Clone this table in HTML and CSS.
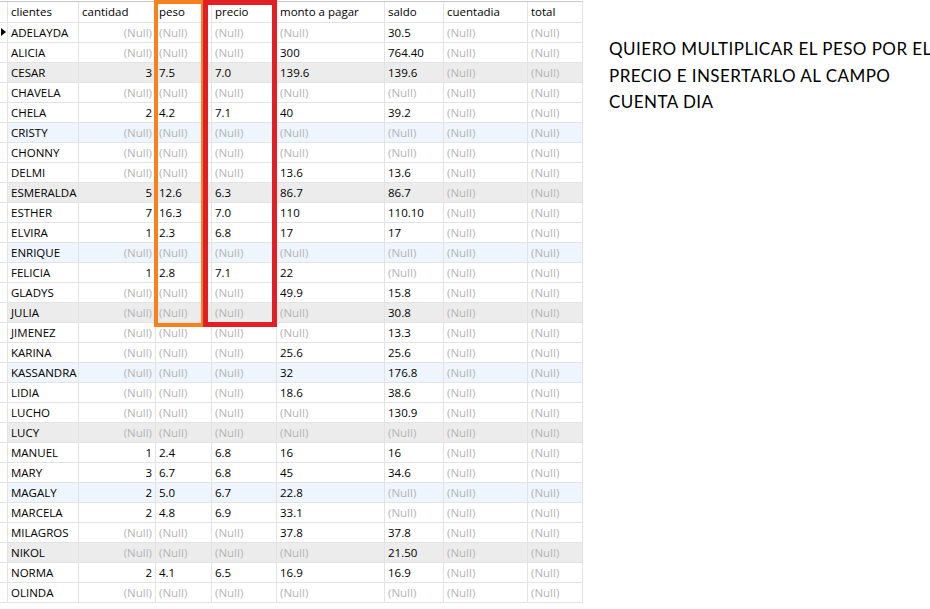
FILE: index.html
```html
<!DOCTYPE html>
<html>
<head>
<meta charset="utf-8">
<link rel="stylesheet" href="styles.css">
</head>
<body>
<div class="page">
  <div class="grid-wrap">
    <div class="grid">
      <div class="row head"><div class="c ind"></div><div class="c">clientes</div><div class="c">cantidad</div><div class="c">peso</div><div class="c">precio</div><div class="c">monto a pagar</div><div class="c">saldo</div><div class="c">cuentadia</div><div class="c">total</div></div>
      <div class="row"><div class="c ind"><span class="arrow"></span></div><div class="c">ADELAYDA</div><div class="c r n">(Null)</div><div class="c n">(Null)</div><div class="c n">(Null)</div><div class="c n">(Null)</div><div class="c">30.5</div><div class="c n">(Null)</div><div class="c n">(Null)</div></div>
      <div class="row"><div class="c ind"></div><div class="c">ALICIA</div><div class="c r n">(Null)</div><div class="c n">(Null)</div><div class="c n">(Null)</div><div class="c">300</div><div class="c">764.40</div><div class="c n">(Null)</div><div class="c n">(Null)</div></div>
      <div class="row gray"><div class="c ind"></div><div class="c">CESAR</div><div class="c r">3</div><div class="c">7.5</div><div class="c">7.0</div><div class="c">139.6</div><div class="c">139.6</div><div class="c n">(Null)</div><div class="c n">(Null)</div></div>
      <div class="row"><div class="c ind"></div><div class="c">CHAVELA</div><div class="c r n">(Null)</div><div class="c n">(Null)</div><div class="c n">(Null)</div><div class="c n">(Null)</div><div class="c n">(Null)</div><div class="c n">(Null)</div><div class="c n">(Null)</div></div>
      <div class="row"><div class="c ind"></div><div class="c">CHELA</div><div class="c r">2</div><div class="c">4.2</div><div class="c">7.1</div><div class="c">40</div><div class="c">39.2</div><div class="c n">(Null)</div><div class="c n">(Null)</div></div>
      <div class="row blue"><div class="c ind"></div><div class="c">CRISTY</div><div class="c r n">(Null)</div><div class="c n">(Null)</div><div class="c n">(Null)</div><div class="c n">(Null)</div><div class="c n">(Null)</div><div class="c n">(Null)</div><div class="c n">(Null)</div></div>
      <div class="row"><div class="c ind"></div><div class="c">CHONNY</div><div class="c r n">(Null)</div><div class="c n">(Null)</div><div class="c n">(Null)</div><div class="c n">(Null)</div><div class="c n">(Null)</div><div class="c n">(Null)</div><div class="c n">(Null)</div></div>
      <div class="row"><div class="c ind"></div><div class="c">DELMI</div><div class="c r n">(Null)</div><div class="c n">(Null)</div><div class="c n">(Null)</div><div class="c">13.6</div><div class="c">13.6</div><div class="c n">(Null)</div><div class="c n">(Null)</div></div>
      <div class="row gray"><div class="c ind"></div><div class="c">ESMERALDA</div><div class="c r">5</div><div class="c">12.6</div><div class="c">6.3</div><div class="c">86.7</div><div class="c">86.7</div><div class="c n">(Null)</div><div class="c n">(Null)</div></div>
      <div class="row"><div class="c ind"></div><div class="c">ESTHER</div><div class="c r">7</div><div class="c">16.3</div><div class="c">7.0</div><div class="c">110</div><div class="c">110.10</div><div class="c n">(Null)</div><div class="c n">(Null)</div></div>
      <div class="row"><div class="c ind"></div><div class="c">ELVIRA</div><div class="c r">1</div><div class="c">2.3</div><div class="c">6.8</div><div class="c">17</div><div class="c">17</div><div class="c n">(Null)</div><div class="c n">(Null)</div></div>
      <div class="row blue"><div class="c ind"></div><div class="c">ENRIQUE</div><div class="c r n">(Null)</div><div class="c n">(Null)</div><div class="c n">(Null)</div><div class="c n">(Null)</div><div class="c n">(Null)</div><div class="c n">(Null)</div><div class="c n">(Null)</div></div>
      <div class="row"><div class="c ind"></div><div class="c">FELICIA</div><div class="c r">1</div><div class="c">2.8</div><div class="c">7.1</div><div class="c">22</div><div class="c n">(Null)</div><div class="c n">(Null)</div><div class="c n">(Null)</div></div>
      <div class="row"><div class="c ind"></div><div class="c">GLADYS</div><div class="c r n">(Null)</div><div class="c n">(Null)</div><div class="c n">(Null)</div><div class="c">49.9</div><div class="c">15.8</div><div class="c n">(Null)</div><div class="c n">(Null)</div></div>
      <div class="row gray"><div class="c ind"></div><div class="c">JULIA</div><div class="c r n">(Null)</div><div class="c n">(Null)</div><div class="c n">(Null)</div><div class="c n">(Null)</div><div class="c">30.8</div><div class="c n">(Null)</div><div class="c n">(Null)</div></div>
      <div class="row"><div class="c ind"></div><div class="c">JIMENEZ</div><div class="c r n">(Null)</div><div class="c n">(Null)</div><div class="c n">(Null)</div><div class="c n">(Null)</div><div class="c">13.3</div><div class="c n">(Null)</div><div class="c n">(Null)</div></div>
      <div class="row"><div class="c ind"></div><div class="c">KARINA</div><div class="c r n">(Null)</div><div class="c n">(Null)</div><div class="c n">(Null)</div><div class="c">25.6</div><div class="c">25.6</div><div class="c n">(Null)</div><div class="c n">(Null)</div></div>
      <div class="row blue"><div class="c ind"></div><div class="c">KASSANDRA</div><div class="c r n">(Null)</div><div class="c n">(Null)</div><div class="c n">(Null)</div><div class="c">32</div><div class="c">176.8</div><div class="c n">(Null)</div><div class="c n">(Null)</div></div>
      <div class="row"><div class="c ind"></div><div class="c">LIDIA</div><div class="c r n">(Null)</div><div class="c n">(Null)</div><div class="c n">(Null)</div><div class="c">18.6</div><div class="c">38.6</div><div class="c n">(Null)</div><div class="c n">(Null)</div></div>
      <div class="row"><div class="c ind"></div><div class="c">LUCHO</div><div class="c r n">(Null)</div><div class="c n">(Null)</div><div class="c n">(Null)</div><div class="c n">(Null)</div><div class="c">130.9</div><div class="c n">(Null)</div><div class="c n">(Null)</div></div>
      <div class="row gray"><div class="c ind"></div><div class="c">LUCY</div><div class="c r n">(Null)</div><div class="c n">(Null)</div><div class="c n">(Null)</div><div class="c n">(Null)</div><div class="c n">(Null)</div><div class="c n">(Null)</div><div class="c n">(Null)</div></div>
      <div class="row"><div class="c ind"></div><div class="c">MANUEL</div><div class="c r">1</div><div class="c">2.4</div><div class="c">6.8</div><div class="c">16</div><div class="c">16</div><div class="c n">(Null)</div><div class="c n">(Null)</div></div>
      <div class="row"><div class="c ind"></div><div class="c">MARY</div><div class="c r">3</div><div class="c">6.7</div><div class="c">6.8</div><div class="c">45</div><div class="c">34.6</div><div class="c n">(Null)</div><div class="c n">(Null)</div></div>
      <div class="row blue"><div class="c ind"></div><div class="c">MAGALY</div><div class="c r">2</div><div class="c">5.0</div><div class="c">6.7</div><div class="c">22.8</div><div class="c n">(Null)</div><div class="c n">(Null)</div><div class="c n">(Null)</div></div>
      <div class="row"><div class="c ind"></div><div class="c">MARCELA</div><div class="c r">2</div><div class="c">4.8</div><div class="c">6.9</div><div class="c">33.1</div><div class="c n">(Null)</div><div class="c n">(Null)</div><div class="c n">(Null)</div></div>
      <div class="row"><div class="c ind"></div><div class="c">MILAGROS</div><div class="c r n">(Null)</div><div class="c n">(Null)</div><div class="c n">(Null)</div><div class="c">37.8</div><div class="c">37.8</div><div class="c n">(Null)</div><div class="c n">(Null)</div></div>
      <div class="row gray"><div class="c ind"></div><div class="c">NIKOL</div><div class="c r n">(Null)</div><div class="c n">(Null)</div><div class="c n">(Null)</div><div class="c n">(Null)</div><div class="c">21.50</div><div class="c n">(Null)</div><div class="c n">(Null)</div></div>
      <div class="row"><div class="c ind"></div><div class="c">NORMA</div><div class="c r">2</div><div class="c">4.1</div><div class="c">6.5</div><div class="c">16.9</div><div class="c">16.9</div><div class="c n">(Null)</div><div class="c n">(Null)</div></div>
      <div class="row"><div class="c ind"></div><div class="c">OLINDA</div><div class="c r n">(Null)</div><div class="c n">(Null)</div><div class="c n">(Null)</div><div class="c n">(Null)</div><div class="c n">(Null)</div><div class="c n">(Null)</div><div class="c n">(Null)</div></div>
    </div>
    <div class="mark orange"></div>
    <div class="mark red"></div>
  </div>
  <div class="note">
    <div class="line">QUIERO MULTIPLICAR EL PESO POR EL</div>
    <div class="line">PRECIO E INSERTARLO AL CAMPO</div>
    <div class="line">CUENTA DIA</div>
  </div>
</div>
</body>
</html>
```

FILE: styles.css
```css
html, body {
  margin: 0;
  padding: 0;
  background: #ffffff;
  overflow: hidden;
}
.page {
  display: flex;
  align-items: flex-start;
  width: 930px;
  height: 609px;
  overflow: hidden;
}
.grid-wrap {
  position: relative;
  flex: 0 0 auto;
  padding-top: 1px;
}
.grid {
  border-top: 1px solid #c9c9c9;
  font-family: "Open Sans", "Noto Sans", sans-serif;
  font-size: 11.5px;
  color: #000;
}
.row {
  display: grid;
  grid-template-columns: 8px 71px 77px 56px 65px 108px 59px 84px 55px;
  height: 20px;
}
.row.head {
  height: 21px;
}
.row.gray {
  background: #ececec;
}
.row.blue {
  background: #eef5fd;
}
.c {
  box-sizing: border-box;
  border-right: 1px solid #e3e3e3;
  border-bottom: 1px solid #e3e3e3;
  padding: 0 3px;
  line-height: 19px;
  white-space: nowrap;
  overflow: hidden;
}
.c.ind {
  padding: 0;
  position: relative;
  background: #fff;
}
.c.r {
  text-align: right;
}
.c.n {
  color: #b4b4b4;
}
.arrow {
  position: absolute;
  left: 1px;
  top: 5px;
  width: 0;
  height: 0;
  border-top: 4px solid transparent;
  border-bottom: 4px solid transparent;
  border-left: 5px solid #000;
}
.mark {
  position: absolute;
  top: 0;
  height: 327px;
  box-sizing: border-box;
}
.mark.orange {
  left: 154px;
  width: 51px;
  border: 4px solid #f6821f;
}
.mark.red {
  left: 203px;
  width: 74px;
  border: 5px solid #e31f26;
}
.note {
  margin-left: 26px;
  padding-top: 36px;
  flex: 0 0 auto;
  font-family: "Lato", "Open Sans", sans-serif;
  font-size: 17px;
  letter-spacing: 0.45px;
  line-height: 26.5px;
  color: #000;
}
.line {
  white-space: nowrap;
}
```
